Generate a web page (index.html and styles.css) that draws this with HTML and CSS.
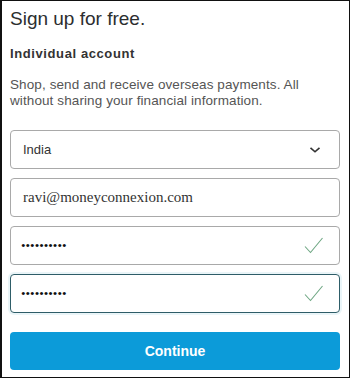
FILE: index.html
```html
<!DOCTYPE html>
<html lang="en">
<head>
<meta charset="UTF-8">
<meta name="viewport" content="width=device-width, initial-scale=1.0">
<title>Sign up</title>
<link rel="stylesheet" href="styles.css">
</head>
<body>

<div class="frame">
  <h1 class="title">Sign up for free.</h1>
  <h2 class="subtitle">Individual account</h2>
  <p class="intro">Shop, send and receive overseas payments. All without sharing your financial information.</p>

  <div class="fields">
    <div class="field">
      <span class="country">India</span>
      <svg class="chevron" width="12" height="8" viewBox="0 0 12 8">
        <path d="M1.5 1.8 L6 5.8 L10.5 1.8" fill="none" stroke="#333" stroke-width="1.6"/>
      </svg>
    </div>
    <div class="field">
      <span class="email">ravi@moneyconnexion.com</span>
    </div>
    <div class="field">
      <span class="dots">••••••••••</span>
      <svg class="check" width="20" height="18" viewBox="0 0 20 18">
        <path d="M1 9.5 L6.5 15.5 L18.5 1" fill="none" stroke="#6fa784" stroke-width="1.1"/>
      </svg>
    </div>
    <div class="field field-focus">
      <span class="dots">••••••••••</span>
      <svg class="check" width="20" height="18" viewBox="0 0 20 18">
        <path d="M1 9.5 L6.5 15.5 L18.5 1" fill="none" stroke="#6fa784" stroke-width="1.1"/>
      </svg>
    </div>
  </div>

  <button class="continue">Continue</button>
</div>

</body>
</html>
```

FILE: styles.css
```css
body {
  margin: 0;
  font-family: 'Liberation Sans', Arial, sans-serif;
  background-color: #fff;
  color: #333;
}
.frame {
  box-sizing: border-box;
  width: 350px;
  height: 378px;
  border: 1px solid #111;
  border-left-width: 2px;
  padding: 6px 9px 0 8px;
  display: flex;
  flex-direction: column;
}
.title {
  margin: 0;
  font-size: 19px;
  line-height: 24px;
  font-weight: normal;
  color: #2c2e2f;
}
.subtitle {
  margin: 15px 0 0;
  font-size: 13px;
  line-height: 16px;
  font-weight: bold;
  letter-spacing: 0.6px;
  color: #333;
}
.intro {
  margin: 15px 0 0;
  font-size: 13.5px;
  line-height: 16px;
  letter-spacing: 0.1px;
  color: #555;
}
.fields {
  display: flex;
  flex-direction: column;
  gap: 9px;
  margin-top: 21px;
}
.field {
  box-sizing: border-box;
  height: 39px;
  border: 1px solid #a9a9a9;
  border-radius: 4px;
  padding: 0 15px 0 12px;
  display: flex;
  align-items: center;
  justify-content: space-between;
}
.field-focus {
  border-color: #2e5d68;
  box-shadow: 0 0 0 2px #eaf5f8;
}
.country {
  font-size: 13px;
  color: #333;
}
.email {
  font-family: 'Liberation Serif', 'Times New Roman', serif;
  font-size: 15px;
  color: #333;
}
.dots {
  font-family: 'Liberation Serif', 'Times New Roman', serif;
  font-size: 13px;
  color: #111;
  margin-left: -2px;
}
.chevron {
  margin-right: 3px;
}
.continue {
  margin-top: 19px;
  height: 38px;
  border: none;
  border-radius: 4px;
  background-color: #0c9bd9;
  color: #fff;
  font-family: 'Liberation Sans', Arial, sans-serif;
  font-size: 14px;
  font-weight: bold;
  cursor: pointer;
}
```
